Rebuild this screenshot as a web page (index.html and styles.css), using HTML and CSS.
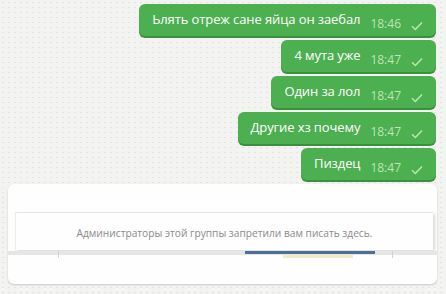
FILE: index.html
```html
<!DOCTYPE html>
<html lang="ru">
<head>
    <meta charset="UTF-8">
    <title>Чат</title>
    <link rel="stylesheet" href="styles.css">
</head>
<body>

<div class="chat">
    <div class="bubble">
        <span class="text">Ьлять отреж сане яйца он заебал</span>
        <span class="time">18:46</span>
        <svg class="check" viewBox="0 0 12 10"><path d="M1 5.2 L4.3 8.4 L11 1.4"/></svg>
    </div>
    <div class="bubble">
        <span class="text">4 мута уже</span>
        <span class="time">18:47</span>
        <svg class="check" viewBox="0 0 12 10"><path d="M1 5.2 L4.3 8.4 L11 1.4"/></svg>
    </div>
    <div class="bubble">
        <span class="text">Один за лол</span>
        <span class="time">18:47</span>
        <svg class="check" viewBox="0 0 12 10"><path d="M1 5.2 L4.3 8.4 L11 1.4"/></svg>
    </div>
    <div class="bubble">
        <span class="text">Другие хз почему</span>
        <span class="time">18:47</span>
        <svg class="check" viewBox="0 0 12 10"><path d="M1 5.2 L4.3 8.4 L11 1.4"/></svg>
    </div>
    <div class="bubble">
        <span class="text">Пиздец</span>
        <span class="time">18:47</span>
        <svg class="check" viewBox="0 0 12 10"><path d="M1 5.2 L4.3 8.4 L11 1.4"/></svg>
    </div>
</div>

<div class="composer">
    <div class="notice">Администраторы этой группы запретили вам писать здесь.</div>
    <div class="strip">
        <span class="divider"></span>
        <span class="blue-bar"></span>
        <span class="divider right"></span>
    </div>
    <div class="yellow-line"></div>
</div>

</body>
</html>
```

FILE: styles.css
```css
body {
    margin: 0;
    width: 446px;
    height: 294px;
    overflow: hidden;
    font-family: "Open Sans", sans-serif;
    background-color: #f3f3f1;
    background-image: radial-gradient(circle, #e4e2e2 0.6px, transparent 0.9px);
    background-size: 6px 5px;
}

.chat {
    display: flex;
    flex-direction: column;
    align-items: flex-end;
    gap: 4px;
    padding: 4px 10px 0 0;
}

.bubble {
    display: flex;
    align-items: baseline;
    height: 32px;
    box-sizing: border-box;
    padding: 6px 13px 0 13px;
    background-color: #4caf50;
    border-radius: 6px;
    box-shadow: 0 2px 0 #3b8f3f;
    color: #fff;
}

.text {
    font-size: 13px;
    line-height: 18px;
    letter-spacing: -0.1px;
}

.time {
    margin-left: 10px;
    font-size: 12px;
    color: #bfe6b8;
    position: relative;
    top: 4px;
}

.check {
    width: 12px;
    height: 10px;
    margin-left: 10px;
    align-self: center;
    position: relative;
    top: 3px;
}

.check path {
    fill: none;
    stroke: #bfe6b8;
    stroke-width: 1.4;
}

.composer {
    margin: 4px 9px 0 8px;
    height: 100px;
    box-sizing: border-box;
    padding-top: 28px;
    background-color: #fefefe;
    border-radius: 6px;
    box-shadow: 0 1px 2px rgba(0, 0, 0, 0.18);
}

.notice {
    margin: 0 4px 0 7px;
    height: 38px;
    box-sizing: border-box;
    border-top: 1px solid #e3e3e3;
    border-left: 1px solid #ececec;
    box-shadow: 2px 2px 3px rgba(0, 0, 0, 0.14);
    font-size: 10.2px;
    line-height: 40px;
    text-align: center;
    color: #8a8a8a;
}

.strip {
    display: flex;
    height: 4px;
    margin-top: 1px;
    background-color: #e6e6e6;
}

.divider {
    width: 1px;
    height: 7px;
    margin-left: 50px;
    background-color: #d2d2d2;
}

.divider.right {
    margin-left: 17px;
}

.blue-bar {
    width: 130px;
    height: 3px;
    margin-left: 186px;
    background-color: #4f6e96;
}

.yellow-line {
    width: 70px;
    height: 3px;
    margin-left: 275px;
    background-color: #f1ecc4;
}
```
